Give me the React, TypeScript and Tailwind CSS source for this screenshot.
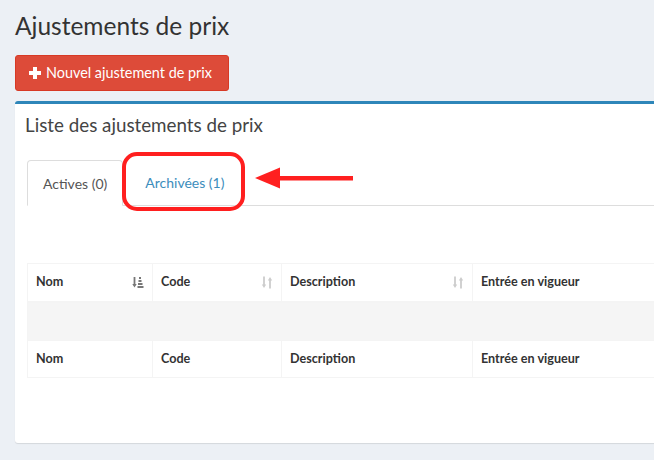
import type { ReactNode } from 'react'

const font = { fontFamily: 'Lato, "Liberation Sans", sans-serif' }

function SortAsc() {
  return (
    <svg width="12" height="13" viewBox="0 0 12 13" className="text-[#777]">
      <path d="M2.5 1v8.5" stroke="currentColor" strokeWidth="1.8" />
      <path d="M0.3 8l2.2 3.5 2.2-3.5z" fill="currentColor" />
      <rect x="7" y="1" width="2" height="2" fill="currentColor" />
      <rect x="6.5" y="4" width="3" height="2" fill="currentColor" />
      <rect x="6" y="7" width="4.5" height="2" fill="currentColor" />
      <rect x="5.5" y="10" width="6" height="2" fill="currentColor" />
    </svg>
  )
}

function SortBoth() {
  return (
    <svg width="12" height="13" viewBox="0 0 12 13" className="text-[#ccc]">
      <path d="M3 0.5v9" stroke="currentColor" strokeWidth="1.8" />
      <path d="M0.8 8.5l2.2 3.5 2.2-3.5z" fill="currentColor" />
      <path d="M9 3.5v9" stroke="currentColor" strokeWidth="1.8" />
      <path d="M6.8 4.5l2.2-3.5 2.2 3.5z" fill="currentColor" />
    </svg>
  )
}

function Th({ children, icon, w }: { children: ReactNode; icon?: ReactNode; w: string }) {
  return (
    <th className={`${w} border-r border-[#f4f4f4] px-2 text-left text-[12.6px] font-bold text-[#333]`}>
      <div className="flex items-center justify-between">
        <span>{children}</span>
        {icon}
      </div>
    </th>
  )
}

export default function App() {
  return (
    <div className="h-[460px] w-[654px] overflow-hidden bg-[#ecf0f5]" style={font}>
      <div className="px-[15px] pt-[10px]">
        <h1 className="text-[24.5px] leading-[32px] text-[#333]">Ajustements de prix</h1>
        <button className="mt-[13px] flex h-[36px] w-[214px] items-center gap-1 rounded-[3px] border border-[#d73925] bg-[#dd4b39] px-3 text-[14.4px] text-white">
          <svg width="14" height="14" viewBox="0 0 14 14">
            <path d="M5 1h4v4h4v4H9v4H5V9H1V5h4z" fill="white" />
          </svg>
          Nouvel ajustement de prix
        </button>

        <div className="mt-[10px] h-[342px] w-[700px] rounded-[3px] border-t-[3px] border-[#2e86b9] bg-white shadow-[0_1px_1px_rgba(0,0,0,0.1)]">
          <div className="px-[10px] pt-[10px]">
            <h3 className="text-[18.8px] leading-[22px] text-[#444]">Liste des ajustements de prix</h3>
          </div>
          <div className="px-3 pt-[24px]">
            <div className="relative flex h-[46px] items-end border-b border-[#ddd]">
              <div className="-mb-px flex h-[46px] items-center rounded-t-[4px] border border-b-white border-[#ddd] bg-white px-[15px] text-[14px] text-[#555]">
                Actives (0)
              </div>
              <div className="flex h-[46px] items-center px-[22px] text-[14px] text-[#3c8dbc]">Archivées (1)</div>
              <div className="absolute left-[95px] top-[-8px] h-[59px] w-[123px] rounded-[15px] border-[4px] border-[#ff1f1f]" />
              <svg className="absolute left-[228px] top-[6px]" width="100" height="24" viewBox="0 0 100 24">
                <path d="M0 12L25 1.5v21z" fill="#ff2020" />
                <rect x="22" y="10" width="76" height="4.5" fill="#ff2020" />
              </svg>
            </div>

            <table className="mt-[57px] w-[700px] border-collapse border border-[#f4f4f4]">
              <thead>
                <tr className="h-[38px] border-b-2 border-[#f4f4f4]">
                  <Th w="w-[125px]" icon={<SortAsc />}>Nom</Th>
                  <Th w="w-[129px]" icon={<SortBoth />}>Code</Th>
                  <Th w="w-[191px]" icon={<SortBoth />}>Description</Th>
                  <Th w="">Entrée en vigueur</Th>
                </tr>
              </thead>
              <tbody>
                <tr className="h-[39px] bg-[#f5f5f5]">
                  <td colSpan={4} />
                </tr>
              </tbody>
              <tfoot>
                <tr className="h-[37px] border-t border-[#f4f4f4]">
                  <Th w="">Nom</Th>
                  <Th w="">Code</Th>
                  <Th w="">Description</Th>
                  <Th w="">Entrée en vigueur</Th>
                </tr>
              </tfoot>
            </table>
          </div>
        </div>
      </div>
    </div>
  )
}
